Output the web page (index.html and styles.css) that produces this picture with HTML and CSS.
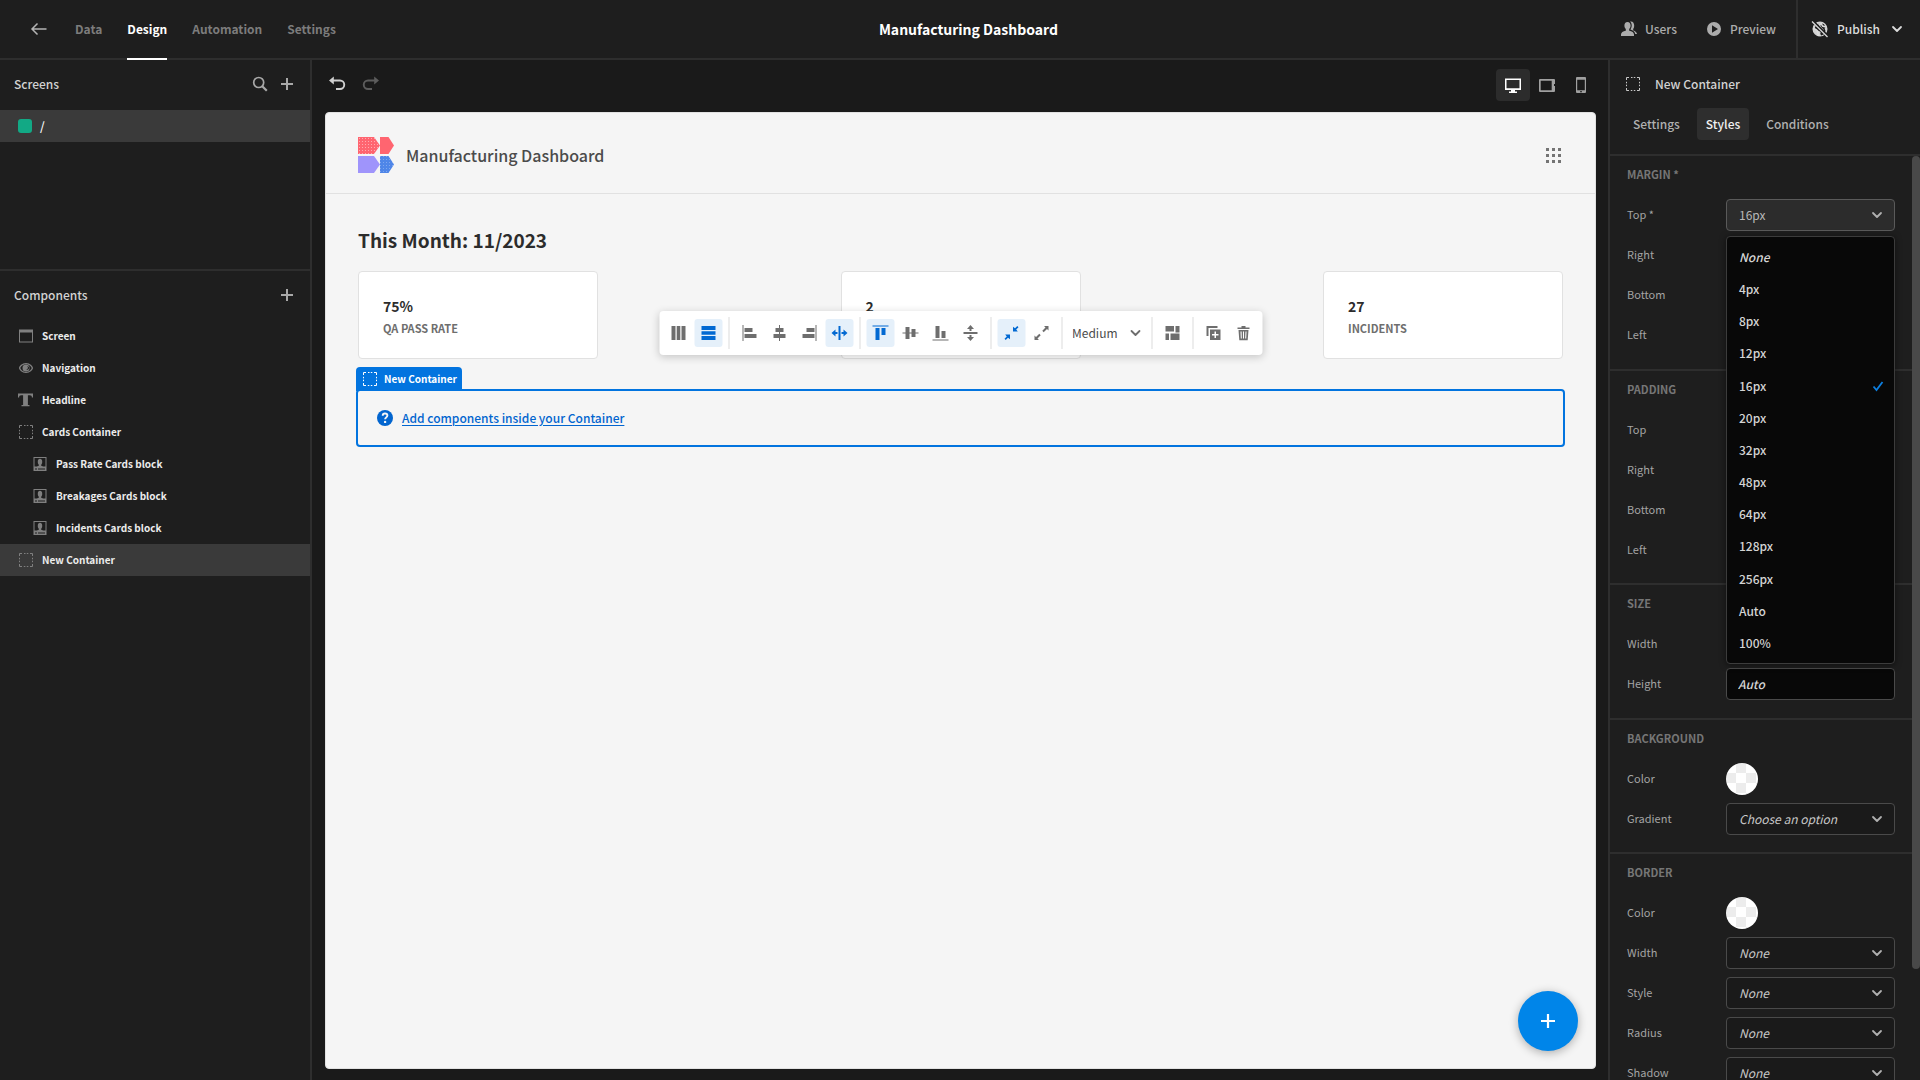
FILE: index.html
```html
<!DOCTYPE html>
<html lang="en">
<head>
<meta charset="utf-8">
<title>Manufacturing Dashboard</title>
<link rel="stylesheet" href="styles.css">
</head>
<body>
<svg class="sprite" aria-hidden="true">
  <defs>
    <pattern id="dots" width="3" height="3" patternUnits="userSpaceOnUse"><rect x="1" y="1" width="1" height="1" fill="#fff" opacity=".45"/></pattern>
    <symbol id="chevron" viewBox="0 0 12 12"><path d="M2 4l4 4 4-4" fill="none" stroke="currentColor" stroke-width="1.8" stroke-linecap="round" stroke-linejoin="round"/></symbol>
    <symbol id="plus" viewBox="0 0 18 18"><path d="M8 3h2v5h5v2h-5v5H8v-5H3V8h5z"/></symbol>
    <symbol id="box" viewBox="0 0 18 18"><path d="M2.500 5V2.500H5M7 2.500h1.500M9.800 2.500h1.500M13 2.500h2.500V5M15.500 6.800v1.500M15.500 9.700v1.500M15.500 13v2.500H13M11.300 15.500H9.800M8.300 15.500H6.800M5 15.500H2.500V13M2.500 11.200V9.700M2.500 8.300V6.800" fill="none" stroke="currentColor"/></symbol>
    <symbol id="card" viewBox="0 0 18 18"><path fill-rule="evenodd" d="M2.500 2h13v14h-13zM3.500 3v8.500h2.300l2-.7v-1C6.900 8.900 6.800 7.800 6.800 6.500 6.800 4.800 7.700 3.800 9 3.800s2.200 1 2.200 2.700c0 1.300-.1 2.400-1 3.300v1l2 .7h2.300V3zM4 13.500v1h2v-1zM7 13.500v1h7v-1z"/></symbol>
  </defs>
</svg>
<div class="app">
  <header class="topbar">
    <nav class="topnav" aria-label="Main">
      <button class="back" aria-label="Back"><svg class="icon" viewBox="0 0 18 18"><path d="M16.500 9h-14M7.500 3.500L2 9l5.500 5.500" fill="none" stroke="currentColor" stroke-width="1.500"/></svg></button>
      <a class="topnav-link" href="#">Data</a>
      <a class="topnav-link is-active" href="#">Design</a>
      <a class="topnav-link" href="#">Automation</a>
      <a class="topnav-link" href="#">Settings</a>
    </nav>
    <h1 class="app-title">Manufacturing Dashboard</h1>
    <div class="top-actions">
      <button class="top-action"><svg class="icon" viewBox="0 0 18 18"><path d="M7.500 2C5.500 2 4.400 3.500 4.400 5.600c0 1.400.5 2.700 1.400 3.500v1.600C3 11.300 1 12.500 1 14.500V16h13v-1.500c0-2-2-3.200-4.800-3.800V9.100c.9-.8 1.400-2.100 1.400-3.500C10.600 3.500 9.500 2 7.500 2zM10 1.600c1.200 1 1.700 2.300 1.700 4 0 1.500-.4 2.700-1.300 3.800 2.700.8 4.600 2.400 4.800 4.600H17c0-1.600-1.700-3-3.800-3.600V9c.7-.8 1-1.900 1-3.200C14.200 3.300 13 1 10 1.600z"/></svg>Users</button>
      <button class="top-action"><svg class="icon" viewBox="0 0 18 18"><path fill-rule="evenodd" d="M9 2a7 7 0 100 14A7 7 0 009 2zM7 5.200l6 3.800-6 3.800z"/></svg>Preview</button>
      <button class="publish"><svg class="icon" viewBox="0 0 18 18"><path fill-rule="evenodd" d="M9 1.500a7.500 7.500 0 100 15 7.500 7.500 0 000-15zM6.300 3.200L8 3.600l.7 1.500 1.600-.2.600-1.500 2 .9 1.700 2.700-1 1.500.9 2.500-1.600 3.200-2.600 1.200-1-1.500.3-2-2-1.200-2.800-.7-.9-2.500z" opacity=".95"/><path d="M5.500 3.500c2 0 3.500 1.500 3.500 3s3.500 2.500 3 4.500M2 8.500c2.500.5 4.500 2 4.500 3.500s1 2.500 1.500 4M10 3l1.500 3L15 7" fill="none" stroke="currentColor" stroke-width="1.600"/><path d="M1.500 1l15.500 15.500" stroke="#1e1e1e" stroke-width="3"/><path d="M1 1.500l15.500 15.500" stroke="currentColor" stroke-width="1.300"/></svg>Publish<svg class="chevron" viewBox="0 0 12 12"><use href="#chevron"/></svg></button>
    </div>
  </header>

  <aside class="left">
    <section class="screens">
      <header class="panel-head"><h2 class="panel-title">Screens</h2>
        <button class="icon-btn" aria-label="Search screens"><svg class="icon" viewBox="0 0 18 18"><circle cx="7.700" cy="7.500" r="5" fill="none" stroke="currentColor" stroke-width="1.700"/><path d="M11.300 11.200l4.500 4.500" stroke="currentColor" stroke-width="2.200"/></svg></button>
        <button class="icon-btn" aria-label="Add screen"><svg class="icon"><use href="#plus"/></svg></button>
      </header>
      <a class="screen-row" href="#"><span class="swatch"></span>/</a>
    </section>
    <section class="components">
      <header class="panel-head"><h2 class="panel-title">Components</h2>
        <button class="icon-btn" aria-label="Add component"><svg class="icon"><use href="#plus"/></svg></button>
      </header>
      <ul class="tree">
        <li class="tree-row"><svg class="tree-icon" viewBox="0 0 18 18"><path fill-rule="evenodd" d="M2 2.500h14v13H2zM3 5.500v9h12v-9z"/></svg>Screen</li>
        <li class="tree-row"><svg class="tree-icon" viewBox="0 0 18 18"><path fill-rule="evenodd" d="M9 4C5 4 2 7.300 2 9s3 5 7 5 7-3.300 7-5-3-5-7-5zm0 1.200c3 0 5.600 2.500 5.600 3.800S12 12.800 9 12.800 3.400 10.300 3.400 9 6 5.200 9 5.200z"/><path fill-rule="evenodd" d="M9 5.500a3.500 3.500 0 100 7 3.500 3.500 0 000-7zm1 1.800a1.700 1.700 0 11-1 2.700 1.400 1.400 0 001-2.700z"/></svg>Navigation</li>
        <li class="tree-row"><svg class="tree-icon" viewBox="0 0 18 18"><path d="M1 2.500h15V6.500h-1.100c0-1.500-.6-2.200-2-2.200h-2v9.700h1.600v1.200h-8V14h1.600V4.300h-2c-1.400 0-2 .7-2 2.200H1z"/></svg>Headline</li>
        <li class="tree-row"><svg class="tree-icon"><use href="#box"/></svg>Cards Container</li>
        <li class="tree-row is-nested"><svg class="tree-icon"><use href="#card"/></svg>Pass Rate Cards block</li>
        <li class="tree-row is-nested"><svg class="tree-icon"><use href="#card"/></svg>Breakages Cards block</li>
        <li class="tree-row is-nested"><svg class="tree-icon"><use href="#card"/></svg>Incidents Cards block</li>
        <li class="tree-row is-selected"><svg class="tree-icon"><use href="#box"/></svg>New Container</li>
      </ul>
    </section>
  </aside>

  <main class="stage">
    <div class="stage-bar">
      <button class="stage-btn is-on" aria-label="Undo"><svg class="icon" viewBox="0 1 18 18"><path d="M5 5.500h7a3.700 3.700 0 010 8.500H8" fill="none" stroke="currentColor" stroke-width="1.900"/><path d="M1 5.500L5.800 1.500v8z"/></svg></button>
      <button class="stage-btn is-off" aria-label="Redo"><svg class="icon" viewBox="0 1 18 18"><path d="M13 5.500H6A3.700 3.700 0 006 14h4" fill="none" stroke="currentColor" stroke-width="1.900"/><path d="M17 5.500l-4.800-4v8z"/></svg></button>
      <div class="stage-devices">
        <button class="stage-btn is-active" aria-label="Desktop"><svg class="icon" viewBox="0 0 18 18"><path fill-rule="evenodd" d="M1 2.500h16V14h-6v1.500h2V17H5v-1.500h2V14H1zM2.500 4v8.300h13V4z"/></svg></button>
        <button class="stage-btn" aria-label="Tablet"><svg class="icon" viewBox="0 0 18 18"><path fill-rule="evenodd" d="M2 3h14a1 1 0 011 1v4h-1v2h1v5a1 1 0 01-1 1H2a1 1 0 01-1-1V4a1 1 0 011-1zm.7 1.700v9.600h11V4.700z"/></svg></button>
        <button class="stage-btn" aria-label="Phone"><svg class="icon" viewBox="0 0 18 18"><path fill-rule="evenodd" d="M5 1h8a1 1 0 011 1v14a1 1 0 01-1 1H5a1 1 0 01-1-1V2a1 1 0 011-1zm.2 2.700v10.600h7.600V3.700zM8 15.200v1h2v-1z"/></svg></button>
      </div>
    </div>

    <div class="frame">
      <header class="site-nav">
        <svg class="logo" viewBox="0 0 36 36"><path d="M0 0h16l6 8.500L16 17H0z" fill="#ff6570"/><path d="M0 0h16l6 8.500L16 17H0z" fill="url(#dots)"/><path d="M22 0h8.500l5.500 8.500-5.500 8.500H22z" fill="#ff6570"/><path d="M0 19h16l6 8.500-6 8.500H0z" fill="#9f94fb"/><path d="M22 19h8.500l5.500 8.500-5.500 8.500H22z" fill="#4f86e8"/><path d="M22 19h8.500l5.500 8.500-5.500 8.500H22z" fill="url(#dots)" opacity=".6"/></svg>
        <span class="site-title">Manufacturing Dashboard</span>
        <button class="site-apps" aria-label="Apps"><svg class="icon" viewBox="0 0 18 18"><path d="M1 2h3v3H1zM7 2h3v3H7zM13 2h3v3h-3zM1 8h3v3H1zM7 8h3v3H7zM13 8h3v3h-3zM1 14h3v3H1zM7 14h3v3H7zM13 14h3v3h-3z"/></svg></button>
      </header>
      <div class="site-body">
        <h2 class="headline">This Month: 11/2023</h2>
        <div class="cards">
          <article class="card"><strong class="card-value">75%</strong><span class="card-label">QA PASS RATE</span></article>
          <article class="card"><strong class="card-value">2</strong><span class="card-label">BREAKAGES</span></article>
          <article class="card"><strong class="card-value">27</strong><span class="card-label">INCIDENTS</span></article>
        </div>
        <section class="selected">
          <span class="selected-tag"><svg class="tree-icon"><use href="#box"/></svg>New Container</span>
          <svg class="icon help" viewBox="0 0 18 18"><circle cx="9" cy="9" r="8"/><path d="M6.700 6.800C6.700 5.300 7.700 4.500 9 4.500s2.400.8 2.400 2.100c0 1.700-2.300 1.900-2.300 3.700" fill="none" stroke="#f5f5f5" stroke-width="1.900"/><circle cx="9.100" cy="12.900" r="1.200" fill="#f5f5f5"/></svg>
          <a class="add-link" href="#">Add components inside your Container</a>

          <div class="toolbar" role="toolbar" aria-label="Layout">
            <div class="group">
              <button class="tool" aria-label="Column layout"><svg class="icon" viewBox="0 0 18 18"><path d="M2 2h4v14H2zM7.200 2h3.600v14H7.200zM12 2h4v14h-4z"/></svg></button>
              <button class="tool is-active" aria-label="Row layout"><svg class="icon" viewBox="0 0 18 18"><path d="M2 2h14v4H2zM2 7.200h14v3.600H2zM2 12h14v4H2z"/></svg></button>
            </div>
            <div class="group">
              <button class="tool" aria-label="Align left"><svg class="icon" viewBox="0 0 18 18"><path d="M2 1h1v16H2zM4 4h8v4H4zM4 10h12v4H4z"/></svg></button>
              <button class="tool" aria-label="Align center"><svg class="icon" viewBox="0 0 18 18"><path d="M8.500 1h1v16h-1zM5 4h8v4H5zM3 10h12v4H3z"/></svg></button>
              <button class="tool" aria-label="Align right"><svg class="icon" viewBox="0 0 18 18"><path d="M15 1h1v16h-1zM6 4h8v4H6zM2 10h12v4H2z"/></svg></button>
              <button class="tool is-active" aria-label="Stretch"><svg class="icon" viewBox="0 0 18 18"><path d="M8 2h2v14H8zM1 9l4-3.500V8h2v2H5v2.500zM17 9l-4-3.500V8h-2v2h2v2.500z"/></svg></button>
            </div>
            <div class="group">
              <button class="tool is-active" aria-label="Align top"><svg class="icon" viewBox="0 0 18 18"><path d="M1 1.500h16v1H1zM4 4h4v12H4zM10 4h4v7h-4z"/></svg></button>
              <button class="tool" aria-label="Align middle"><svg class="icon" viewBox="0 0 18 18"><path d="M1 8.500h16v1H1zM4 3h4v12H4zM10 5h4v8h-4z"/></svg></button>
              <button class="tool" aria-label="Align bottom"><svg class="icon" viewBox="0 0 18 18"><path d="M1 15.500h16v1H1zM4 2h4v12H4zM10 7h4v7h-4z"/></svg></button>
              <button class="tool" aria-label="Spread"><svg class="icon" viewBox="0 0 18 18"><path d="M2 8h14v2H2zM9 1l3.500 4H10v2H8V5H5.500zM9 17l3.500-4H10v-2H8v2H5.500z"/></svg></button>
            </div>
            <div class="group">
              <button class="tool is-active" aria-label="Shrink"><svg class="icon" viewBox="0 0 18 18"><path d="M16 3.200L14.800 2 12.500 4.300 10.500 2.700V7.500h4.800l-1.600-2zM2 14.800L3.200 16l2.300-2.300 2 1.600v-4.800H2.700l1.600 2z"/></svg></button>
              <button class="tool" aria-label="Grow"><svg class="icon" viewBox="0 0 18 18"><path d="M11.500 2H16v4.500l-1.500-1.500-3.300 3.200L9.800 6.800 13 3.500zM6.500 16H2v-4.500L3.500 13l3.300-3.200 1.400 1.400L5 14.500z"/></svg></button>
            </div>
            <div class="group">
              <span class="gap-picker"><select class="gap-select" aria-label="Gap"><option>Medium</option></select><svg class="chevron"><use href="#chevron"/></svg></span>
            </div>
            <div class="group">
              <button class="tool" aria-label="Layout blocks"><svg class="icon" viewBox="0 0 18 18"><path d="M2 2h8.500v5.500H2zM12 2h4v6.500h-4zM2 9.500h3.500V16H2zM7 9.500h9V16H7z"/></svg></button>
            </div>
            <div class="group">
              <button class="tool" aria-label="Duplicate"><svg class="icon" viewBox="0 0 18 18"><path d="M2 2h11v2H4v8H2z"/><path fill-rule="evenodd" d="M5.500 5.500H16V16H5.500zM10 7.500V10H7.500v1.500H10V14h1.500v-2.500H14V10h-2.500V7.500z"/></svg></button>
              <button class="tool" aria-label="Delete"><svg class="icon" viewBox="0 0 18 18"><path fill-rule="evenodd" d="M7 2h4v1.500h4V5H3V3.500h4zM4 6h10l-.8 10.200H4.800zM6 7.500l.3 7h1l-.2-7zM8.500 7.500v7h1v-7zM11 7.500l-.3 7h1l.3-7z"/></svg></button>
            </div>
          </div>
        </section>
      </div>
      <button class="fab" aria-label="Add"><svg class="icon" viewBox="0 0 18 18"><path d="M9 2v14M2 9h14" stroke="currentColor" stroke-width="2.200"/></svg></button>
    </div>
  </main>

  <aside class="right">
    <header class="inspect-head"><svg class="icon"><use href="#box"/></svg><h2 class="panel-title">New Container</h2></header>
    <nav class="inspect-tabs"><button class="tab">Settings</button><button class="tab is-active">Styles</button><button class="tab">Conditions</button></nav>
    <div class="scroller">
      <div class="sections">
        <section class="section">
          <h3 class="section-title">MARGIN *</h3>
          <div class="field"><label for="m-top">Top *</label>
            <div class="picker is-open"><select id="m-top"><option>16px</option></select><svg class="chevron"><use href="#chevron"/></svg>
              <ul class="menu" role="listbox" aria-label="Top margin">
                <li class="option is-none" role="option">None</li>
                <li class="option" role="option">4px</li>
                <li class="option" role="option">8px</li>
                <li class="option" role="option">12px</li>
                <li class="option" role="option" aria-selected="true">16px<svg class="chevron" viewBox="0 0 12 12"><path d="M1.500 6.500l3 3.500 6-8" fill="none" stroke="#0d7fe0" stroke-width="1.800"/></svg></li>
                <li class="option" role="option">20px</li>
                <li class="option" role="option">32px</li>
                <li class="option" role="option">48px</li>
                <li class="option" role="option">64px</li>
                <li class="option" role="option">128px</li>
                <li class="option" role="option">256px</li>
                <li class="option" role="option">Auto</li>
                <li class="option" role="option">100%</li>
              </ul>
            </div></div>
          <div class="field"><label for="m-right">Right</label><div class="picker"><select id="m-right"><option>None</option></select><svg class="chevron"><use href="#chevron"/></svg></div></div>
          <div class="field"><label for="m-bottom">Bottom</label><div class="picker"><select id="m-bottom"><option>None</option></select><svg class="chevron"><use href="#chevron"/></svg></div></div>
          <div class="field"><label for="m-left">Left</label><div class="picker"><select id="m-left"><option>None</option></select><svg class="chevron"><use href="#chevron"/></svg></div></div>
        </section>
        <section class="section">
          <h3 class="section-title">PADDING</h3>
          <div class="field"><label for="p-top">Top</label><div class="picker"><select id="p-top"><option>None</option></select><svg class="chevron"><use href="#chevron"/></svg></div></div>
          <div class="field"><label for="p-right">Right</label><div class="picker"><select id="p-right"><option>None</option></select><svg class="chevron"><use href="#chevron"/></svg></div></div>
          <div class="field"><label for="p-bottom">Bottom</label><div class="picker"><select id="p-bottom"><option>None</option></select><svg class="chevron"><use href="#chevron"/></svg></div></div>
          <div class="field"><label for="p-left">Left</label><div class="picker"><select id="p-left"><option>None</option></select><svg class="chevron"><use href="#chevron"/></svg></div></div>
        </section>
        <section class="section">
          <h3 class="section-title">SIZE</h3>
          <div class="field"><label for="s-width">Width</label><input class="text" id="s-width" type="text" placeholder="Auto"></div>
          <div class="field"><label for="s-height">Height</label><input class="text" id="s-height" type="text" placeholder="Auto"></div>
        </section>
        <section class="section">
          <h3 class="section-title">BACKGROUND</h3>
          <div class="field"><label for="b-color">Color</label><button class="color" id="b-color"></button></div>
          <div class="field"><label for="b-grad">Gradient</label><div class="picker"><select id="b-grad"><option>Choose an option</option></select><svg class="chevron"><use href="#chevron"/></svg></div></div>
        </section>
        <section class="section">
          <h3 class="section-title">BORDER</h3>
          <div class="field"><label for="o-color">Color</label><button class="color" id="o-color"></button></div>
          <div class="field"><label for="o-width">Width</label><div class="picker"><select id="o-width"><option>None</option></select><svg class="chevron"><use href="#chevron"/></svg></div></div>
          <div class="field"><label for="o-style">Style</label><div class="picker"><select id="o-style"><option>None</option></select><svg class="chevron"><use href="#chevron"/></svg></div></div>
          <div class="field"><label for="o-radius">Radius</label><div class="picker"><select id="o-radius"><option>None</option></select><svg class="chevron"><use href="#chevron"/></svg></div></div>
          <div class="field"><label for="o-shadow">Shadow</label><div class="picker"><select id="o-shadow"><option>None</option></select><svg class="chevron"><use href="#chevron"/></svg></div></div>
        </section>
      </div>
      <div class="track"><div class="thumb"></div></div>
    </div>
  </aside>
</div>
</body>
</html>
```
FILE: styles.css
```css
:root {
  --panel: #1e1e1e;
  --line: #2e2e2e;
  --raised: #3a3a3a;
  --text: #c8c8c8;
  --bright: #ececec;
  --muted: #a0a0a0;
  --blue: #0274df;
}

* { box-sizing: border-box; }

body {
  margin: 0;
  height: 100vh;
  overflow: hidden;
  background: #1a1a1a;
  color: var(--text);
  font: 500 12px/20px "Noto Sans CJK SC", "Noto Sans", sans-serif;
}

h1, h2, h3, ul { margin: 0; padding: 0; }
ul { list-style: none; }

button, select, input { font: inherit; color: inherit; }
button { padding: 0; border: 0; background: none; }
a { color: inherit; text-decoration: none; }

.sprite { position: absolute; width: 0; height: 0; }
.icon { flex: none; width: 18px; height: 18px; fill: currentColor; }
.chevron { flex: none; width: 12px; height: 12px; }
.icon, .chevron, .tree-icon { display: block; }

.app {
  display: grid;
  grid-template: 60px minmax(0, 1fr) / 312px minmax(0, 1fr) 312px;
  height: 100vh;
}

/* Top bar */
.topbar {
  grid-column: 1 / -1;
  display: grid;
  grid-template-columns: 1fr auto 1fr;
  padding-left: 17px;
  border-bottom: 2px solid var(--line);
  background: var(--panel);
}
.topnav { display: flex; gap: 25px; padding-left: 13px; }
.back { display: flex; align-items: center; width: 20px; color: #b4b4b4; }
.topnav-link {
  display: flex;
  align-items: center;
  margin-bottom: -2px;
  border-bottom: 2px solid transparent;
  color: #7c7c7c;
  font-weight: 700;
}
.topnav-link.is-active { border-color: #fff; color: #fff; }
.app-title { align-self: center; color: #fff; font-size: 14px; font-weight: 700; line-height: 20px; }
.top-actions { display: flex; justify-content: flex-end; }
.top-action { display: flex; align-items: center; gap: 7px; margin-right: 28px; color: #acacac; }
.top-action + .top-action { margin-right: 20px; }
.publish {
  display: flex;
  align-items: center;
  gap: 8px;
  width: 124px;
  padding: 0 17px 0 13px;
  border-left: 2px solid var(--line);
  color: #dcdcdc;
}
.publish .chevron { margin-left: auto; }

/* Left panel */
.left { border-right: 2px solid var(--line); background: var(--panel); }
.screens { min-height: 211px; border-bottom: 2px solid var(--line); }
.panel-head { display: flex; align-items: center; gap: 9px; height: 48px; padding: 0 14px; }
.screens .panel-head { margin-bottom: 2px; }
.panel-title { flex: 1; font-size: 12px; font-weight: 500; line-height: 20px; color: #d2d2d2; }
.icon-btn { color: #a8a8a8; }
.screen-row {
  display: flex;
  align-items: center;
  gap: 8px;
  height: 32px;
  padding-left: 18px;
  background: var(--raised);
  color: #fff;
}
.swatch { width: 14px; height: 14px; border-radius: 3px; background: #12a985; }
.tree { padding-top: 1px; }
.tree-row {
  display: flex;
  align-items: center;
  gap: 7px;
  height: 32px;
  padding-left: 17px;
  color: var(--bright);
  font-size: 10px;
  font-weight: 700;
}
.tree-row.is-nested { padding-left: 31px; }
.tree-row.is-selected { background: var(--raised); }
.tree-icon { flex: none; width: 18px; height: 18px; fill: currentColor; }
.tree-row .tree-icon { color: #808080; }

/* Canvas */
.stage { display: flex; flex-direction: column; padding: 0 12px 11px 13px; }
.stage-bar { display: flex; align-items: center; height: 52px; margin: 0 -2px 0 -5px; padding-bottom: 2px; }
.stage-btn { display: grid; place-items: center; width: 34px; height: 32px; border-radius: 4px; color: var(--muted); }
.stage-btn.is-on { color: #d0d0d0; }
.stage-btn.is-off { color: #5c5c5c; }
.stage-btn.is-active { background: #2c2c2c; color: #fff; }
.stage-devices { display: flex; margin-left: auto; }
.frame {
  position: relative;
  flex: 1;
  border: 1px solid #e1e1e1;
  border-radius: 4px;
  background: #f5f5f5;
  color: #2c2c2c;
}
.site-nav {
  display: flex;
  align-items: center;
  gap: 12px;
  height: 81px;
  padding: 3px 32px 0;
  border-bottom: 1px solid #e1e1e1;
}
.logo { width: 36px; height: 36px; }
.site-title { flex: 1; font-size: 16px; line-height: 24px; color: #4b4b4b; }
.site-apps { color: #747474; }
.site-body { padding: 32px; }
.headline { margin-bottom: 17px; font-size: 19px; font-weight: 700; line-height: 28px; }
.cards { display: flex; justify-content: space-between; }
.card {
  display: flex;
  flex-direction: column;
  gap: 2px;
  width: 240px;
  padding: 24px 24px 20px;
  border: 1px solid #e1e1e1;
  border-radius: 4px;
  background: #fff;
}
.card-value { font-size: 14px; font-weight: 700; line-height: 20px; }
.card-label { color: #6e6e6e; font-size: 11px; font-weight: 700; line-height: 20px; }

.selected {
  position: relative;
  display: flex;
  align-items: center;
  gap: 8px;
  height: 54px;
  margin-top: 32px;
  padding: 0 18px;
  outline: 2px solid var(--blue);
  border-radius: 2px;
}
.selected-tag {
  position: absolute;
  left: -2px;
  bottom: 100%;
  display: flex;
  align-items: center;
  gap: 5px;
  height: 24px;
  padding: 0 5px;
  border-radius: 4px 4px 0 0;
  background: var(--blue);
  color: #fff;
  font-size: 10px;
  font-weight: 700;
}
.help { fill: #0265cf; }
.add-link { color: #0265cf; text-decoration: underline; text-underline-offset: 2px; }

.toolbar {
  position: absolute;
  left: 50%;
  bottom: calc(100% + 36px);
  transform: translateX(-50%);
  display: flex;
  padding: 6px 5px;
  border-radius: 4px;
  background: #fff;
  color: #6e6e6e;
  box-shadow: 0 2px 8px rgba(0, 0, 0, .2);
}
.group { display: flex; align-items: center; gap: 2px; height: 32px; }
.group + .group { margin-left: 6px; padding-left: 6px; border-left: 1px solid #dcdcdc; }
.tool { display: grid; place-items: center; width: 28px; height: 28px; border-radius: 3px; }
.tool.is-active { background: #e5f0fa; color: #0269d2; }
.gap-picker { display: grid; align-items: center; width: 77px; }
.gap-picker > * { grid-area: 1 / 1; }
.gap-picker .chevron { justify-self: end; margin-right: 4px; pointer-events: none; }
.gap-select { appearance: none; width: 100%; padding: 0 4px; border: 0; background: none; color: #4b4b4b; font-weight: 400; }

.fab {
  position: absolute;
  right: 17px;
  bottom: 17px;
  display: grid;
  place-items: center;
  width: 60px;
  height: 60px;
  border-radius: 50%;
  background: #0085e9;
  color: #fff;
  box-shadow: 0 2px 10px rgba(0, 0, 0, .3);
}

/* Inspector */
.right { display: flex; flex-direction: column; border-left: 2px solid var(--line); background: var(--panel); }
.inspect-head { display: flex; align-items: center; gap: 13px; height: 48px; padding-left: 14px; }
.inspect-tabs { display: flex; gap: 8px; padding: 0 14px 14px; border-bottom: 2px solid var(--line); }
.tab { height: 32px; padding: 0 9px; border-radius: 4px; color: #b0b0b0; }
.tab.is-active { background: #2e2e2e; color: #f0f0f0; }
.scroller { flex: 1; display: flex; min-height: 0; overflow: hidden; }
.sections { flex: 1; }
.section {
  display: grid;
  gap: 8px;
  padding: 8px 17px 18px;
  border-bottom: 2px solid var(--line);
}
.section:nth-child(even) { padding-bottom: 17px; }
.section-title { margin-bottom: 7px; color: #767676; font-size: 11px; font-weight: 700; line-height: 20px; }
.field { display: grid; grid-template-columns: 99px 1fr; align-items: center; height: 32px; }
.field label { padding-bottom: 2px; color: #a4a4a4; font-size: 11px; font-weight: 400; }
.picker { position: relative; display: grid; align-items: center; }
.picker select, .picker > .chevron { grid-area: 1 / 1; }
.picker > .chevron { justify-self: end; margin-right: 12px; color: #b0b0b0; pointer-events: none; }
.picker select {
  appearance: none;
  width: 100%;
  height: 32px;
  padding: 0 12px;
  border: 1px solid #4a4a4a;
  border-radius: 4px;
  background: #1a1a1a;
  font-style: italic;
  font-weight: 400;
}
.picker.is-open select { border-color: #5a5a5a; background: #2c2c2c; color: #b8b8b8; font-style: normal; }
.menu {
  position: absolute;
  z-index: 1;
  top: calc(100% + 5px);
  left: 0;
  right: 0;
  display: flex;
  flex-direction: column;
  justify-content: space-between;
  height: 428px;
  padding: 4px 0;
  border: 1px solid #3c3c3c;
  border-radius: 4px;
  background: #080808;
  box-shadow: 0 1px 6px rgba(0, 0, 0, .5);
}
.option { display: flex; align-items: center; justify-content: space-between; height: 32px; padding: 0 10px 0 12px; color: #d4d4d4; }
.option.is-none { font-style: italic; }
.text {
  width: 100%;
  height: 32px;
  padding: 0 11px 2px;
  border: 1px solid #4a4a4a;
  border-radius: 4px;
  background: #080808;
}
.text::placeholder { color: #d4d4d4; font-style: italic; }
.color {
  width: 32px;
  height: 32px;
  border-radius: 50%;
  background: conic-gradient(#ececec 25%, #fff 0 50%, #ececec 0 75%, #fff 0) 0 0 / 20px 20px;
}
.track { width: 8px; }
.thumb { height: 88%; border-radius: 4px; background: #494949; }
```
